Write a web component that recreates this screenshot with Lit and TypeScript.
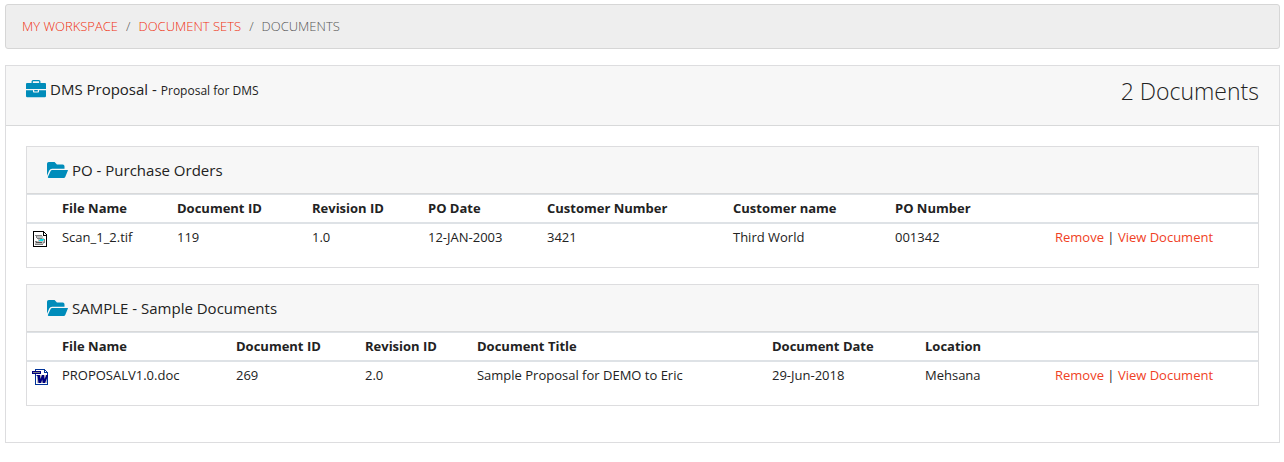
import { LitElement, html, css, svg } from "lit";
import { customElement, property } from "lit/decorators.js";

type FileKind = "tif" | "doc";

interface Column {
  label: string;
  weight: number;
}

interface DocumentGroup {
  title: string;
  columns: Column[];
  kind: FileKind;
  values: string[];
}

const ICON_WEIGHT = 30;
const ACTION_WEIGHT = 208;

const GROUPS: DocumentGroup[] = [
  {
    title: "PO - Purchase Orders",
    kind: "tif",
    columns: [
      { label: "File Name", weight: 115 },
      { label: "Document ID", weight: 135 },
      { label: "Revision ID", weight: 116 },
      { label: "PO Date", weight: 119 },
      { label: "Customer Number", weight: 186 },
      { label: "Customer name", weight: 162 },
      { label: "PO Number", weight: 160 },
    ],
    values: ["Scan_1_2.tif", "119", "1.0", "12-JAN-2003", "3421", "Third World", "001342"],
  },
  {
    title: "SAMPLE - Sample Documents",
    kind: "doc",
    columns: [
      { label: "File Name", weight: 174 },
      { label: "Document ID", weight: 129 },
      { label: "Revision ID", weight: 112 },
      { label: "Document Title", weight: 295 },
      { label: "Document Date", weight: 153 },
      { label: "Location", weight: 130 },
    ],
    values: ["PROPOSALV1.0.doc", "269", "2.0", "Sample Proposal for DEMO to Eric", "29-Jun-2018", "Mehsana"],
  },
];

const briefcase = svg`<svg class="icon" width="20" height="18" viewBox="0 0 20 18" aria-hidden="true">
  <path fill="none" stroke="#008cba" stroke-width="1.3" d="M6.2 4V1.6q0-.9.9-.9h5.8q.9 0 .9.9V4"/>
  <path fill="#008cba" d="M1 3h18q1 0 1 1v5H0V4q0-1 1-1zM0 10.2h7v1.6q0 .8.8.8h4.4q.8 0 .8-.8v-1.6h7V16q0 1.2-1.2 1.2H1.200Q0 17.200 0 16z"/>
  <path fill="#008cba" d="M8.200 10h3.600v1.500H8.200z"/>
</svg>`;

const folder = svg`<svg class="icon" width="21" height="16" viewBox="0 0 576 400" preserveAspectRatio="none" aria-hidden="true">
  <path fill="#008cba" d="M573 215 500 376c-8 15-24 24-41 24H46c-18 0-29-16-20-32l73-144c8-15 24-24 41-24h413c18 0 29 3 20 15zM140 168h340v-56c0-27-21-48-48-48H272L208 0H48C21 0 0 21 0 48v298l58-130c17-29 48-48 82-48z"/>
</svg>`;

const fileIcons: Record<FileKind, unknown> = {
  tif: svg`<svg class="file" width="16" height="16" viewBox="0 0 16 16" shape-rendering="crispEdges" role="img" aria-label="TIF image">
    <path fill="#fff" stroke="#000" d="M1.500.500h10l3 3v12h-13z"/>
    <path fill="#000" d="M11 1h1v3h3v1h-4z"/>
    <path fill="#c0c0c0" d="M4 4h6v1h1v2h1v1h1v3h-1v2h-2v1H4v-1H3v-2h2v-1h1V8H5V6H4z"/>
    <path fill="#808080" d="M3 4h7v1H3zM4 5h1v2H4zM5 7h5v1H5zM3 10h2v1H3zM3 13h8v1H3zM11 11h2v1h-2zM12 8h1v3h-1z"/>
    <path fill="#00e5ee" d="M8 8h4v1h-1v1H7V9h1z"/>
    <path fill="#505050" d="M4 11h6v1H4z"/>
  </svg>`,
  doc: svg`<svg class="file" width="16" height="16" viewBox="0 0 16 16" shape-rendering="crispEdges" role="img" aria-label="Word document">
    <path fill="#fff" stroke="#003399" d="M3.500.500h9l3 3v12h-12z"/>
    <path fill="#003399" d="M12 1h1v2h2v1h-3z"/>
    <path fill="#000080" d="M0 2h9v3H0z"/>
    <path fill="#808080" d="M1 3h7v1H1z"/>
    <path fill="#c0c0c0" d="M5 6h10v8H5z"/>
    <path fill="#000080" shape-rendering="auto" d="M4.500 6H8v1l.5 3L10 6h2l.5 4L14 7V6h2v1l-3 7h-2.200l-.6-3.500L9 14H6.500L5.500 7h-1z"/>
  </svg>`,
};

@customElement("document-group")
export class DocumentGroupCard extends LitElement {
  @property({ attribute: false }) group!: DocumentGroup;

  static styles = css`
    :host {
      display: block;
      border: 1px solid #dddddf;
      background: #fff;
    }
    .head {
      display: flex;
      align-items: center;
      gap: 4px;
      height: 46px;
      padding: 0 20px;
      background: #f7f7f7;
      border-bottom: 1px solid #d8d9da;
    }
    .title {
      margin: 0;
      font-size: 15px;
      font-weight: 400;
      line-height: 24px;
    }
    .table {
      width: 100%;
      margin-bottom: 16px;
      table-layout: fixed;
      border-collapse: separate;
      border-spacing: 0;
    }
    .th,
    .td {
      padding: 4px 5px;
      line-height: 19px;
      text-align: left;
      vertical-align: top;
      white-space: nowrap;
    }
    .th {
      font-weight: 700;
      border-top: 1px solid #dee2e6;
      border-bottom: 2px solid #dee2e6;
    }
    .file {
      display: block;
      margin-top: 3px;
    }
    .link {
      color: #f04124;
      text-decoration: none;
    }
    .link:hover {
      text-decoration: underline;
    }
  `;

  render() {
    const { title, columns, values, kind } = this.group;
    const weights = [ICON_WEIGHT, ...columns.map((c) => c.weight), ACTION_WEIGHT];
    const total = weights.reduce((a, b) => a + b, 0);
    return html`
      <header class="head">${folder}<h2 class="title">${title}</h2></header>
      <table class="table">
        <colgroup>
          ${weights.map((w) => html`<col style="width:${(w / total) * 100}%" />`)}
        </colgroup>
        <thead>
          <tr>
            <th class="th"></th>
            ${columns.map((c) => html`<th class="th" scope="col">${c.label}</th>`)}
            <th class="th"></th>
          </tr>
        </thead>
        <tbody>
          <tr>
            <td class="td">${fileIcons[kind]}</td>
            ${values.map((v) => html`<td class="td">${v}</td>`)}
            <td class="td"><a class="link" href="#remove">Remove</a> | <a class="link" href="#view">View Document</a></td>
          </tr>
        </tbody>
      </table>
    `;
  }
}

@customElement("app-root")
export class AppRoot extends LitElement {
  static styles = css`
    :host {
      display: block;
      padding: 4px 4px 16px 5px;
      font-family: "Open Sans", "Noto Sans", sans-serif;
      font-size: 13px;
      color: #222;
      background: #fff;
    }
    .crumbs {
      display: flex;
      margin: 0 0 16px;
      padding: 12px 16px;
      list-style: none;
      font-weight: 300;
      line-height: 19px;
      text-transform: uppercase;
      background: #eee;
      border: 1px solid #d6d6d6;
      border-radius: 3px;
    }
    .crumb {
      color: #555;
    }
    .crumb + .crumb::before {
      content: "/";
      padding: 0 8px;
      color: #555;
    }
    .link {
      color: #f0300f;
      text-decoration: none;
    }
    .panel {
      border: 1px solid #dddddf;
    }
    .head {
      display: flex;
      justify-content: space-between;
      align-items: flex-start;
      padding: 12px 20px;
      background: #f7f7f7;
      border-bottom: 1px solid #d8d9da;
    }
    .name {
      display: flex;
      align-items: flex-start;
      gap: 4px;
      margin: 0;
      font-size: 15px;
      font-weight: 400;
      line-height: 22px;
    }
    .name .icon {
      margin-top: 2px;
    }
    .note {
      font-size: 12px;
    }
    .count {
      margin: 0;
      font-size: 23px;
      font-weight: 300;
      line-height: 26px;
      padding-bottom: 9px;
    }
    .body {
      display: grid;
      gap: 16px;
      padding: 20px 20px 36px;
    }
  `;

  render() {
    return html`
      <nav aria-label="Breadcrumb">
        <ol class="crumbs">
          <li class="crumb"><a class="link" href="#workspace">My Workspace</a></li>
          <li class="crumb"><a class="link" href="#sets">Document Sets</a></li>
          <li class="crumb" aria-current="page">Documents</li>
        </ol>
      </nav>
      <main class="panel">
        <header class="head">
          <h1 class="name">${briefcase}<span>DMS Proposal - <span class="note">Proposal for DMS</span></span></h1>
          <p class="count">2 Documents</p>
        </header>
        <div class="body">
          ${GROUPS.map((g) => html`<document-group .group=${g}></document-group>`)}
        </div>
      </main>
    `;
  }
}
